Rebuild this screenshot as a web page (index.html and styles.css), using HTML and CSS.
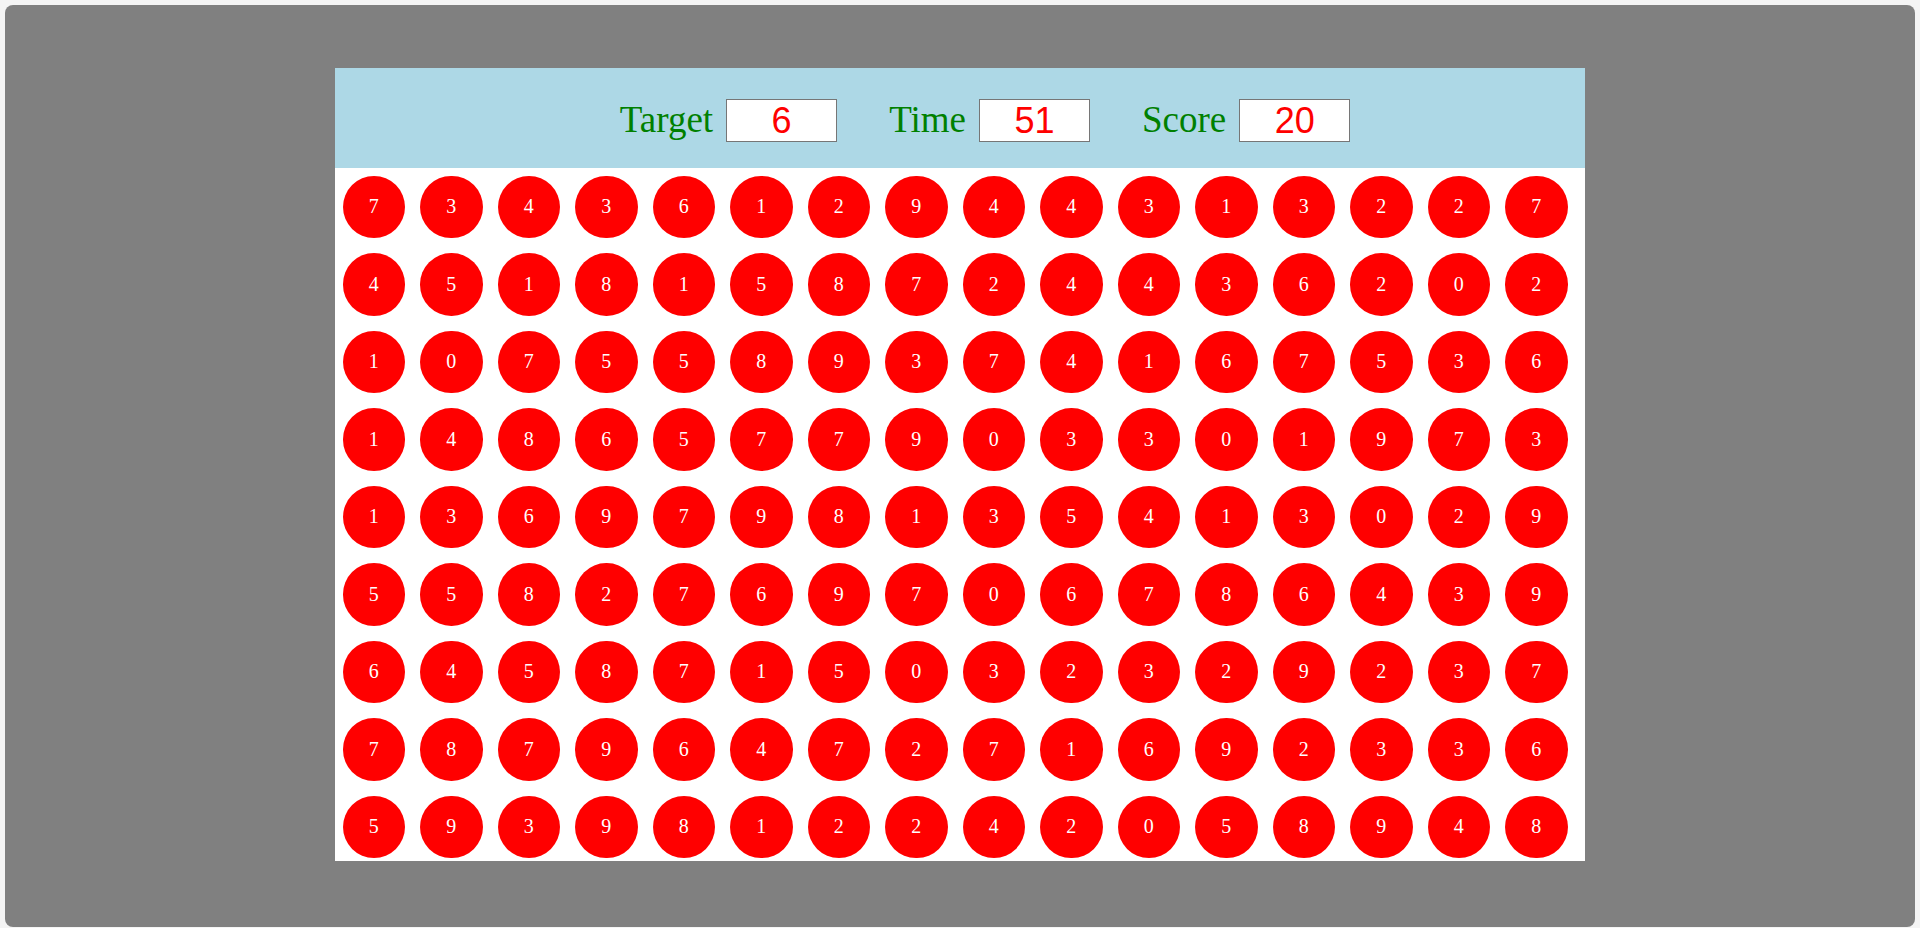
FILE: index.html
```html
<!DOCTYPE html>
<html>
<head>
<meta charset="utf-8">
<title>Number Game</title>
<link rel="stylesheet" href="styles.css">
</head>
<body>
<div class="frame">
  <div class="game">
    <div class="header">
      <div class="field"><span class="label">Target</span><input class="box" type="text" value="6" readonly></div>
      <div class="field"><span class="label">Time</span><input class="box" type="text" value="51" readonly></div>
      <div class="field"><span class="label">Score</span><input class="box" type="text" value="20" readonly></div>
    </div>
    <div class="board" id="board"></div>
  </div>
</div>
<script src="script.js"></script>
</body>
</html>
```

FILE: script.js
```js
const rows = [
  "7343612944313227",
  "4518158724436202",
  "1075589374167536",
  "1486577903301973",
  "1369798135413029",
  "5582769706786439",
  "6458715032329237",
  "7879647271692336",
  "5939812242058948"
];
const board = document.getElementById('board');
rows.forEach(r => {
  for (const d of r) {
    const c = document.createElement('div');
    c.className = 'ball';
    c.textContent = d;
    board.appendChild(c);
  }
});
```

FILE: styles.css
```css
html, body {
  margin: 0;
  padding: 0;
}
body {
  background: #f4f4f4;
  padding: 5px;
  box-sizing: border-box;
  height: 928px;
  overflow: hidden;
}
.frame {
  width: 1910px;
  height: 922px;
  background: #808080;
  border-radius: 8px;
  box-sizing: border-box;
  padding-top: 63px;
  display: flex;
  flex-direction: column;
  align-items: center;
}
.game {
  width: 1250px;
  display: flex;
  flex-direction: column;
}
.header {
  height: 100px;
  background: #add8e6;
  display: flex;
  align-items: center;
  justify-content: center;
  gap: 52px;
  padding-left: 50px;
  padding-top: 5px;
  box-sizing: border-box;
}
.field {
  display: flex;
  align-items: center;
}
.label {
  font-family: "Liberation Serif", "Times New Roman", serif;
  font-size: 37px;
  color: #008000;
  margin-right: 13px;
  line-height: 1.15;
}
.box {
  width: 111px;
  height: 43px;
  box-sizing: border-box;
  border: 1px solid #767676;
  padding: 0;
  margin: 0;
  background: #fff;
  color: #ff0000;
  font-family: "Liberation Sans", Arial, sans-serif;
  font-size: 36px;
  text-align: center;
  outline: none;
}
.board {
  height: 693px;
  background: #fff;
  overflow: hidden;
  box-sizing: border-box;
  padding: 7.5px 0 0 7.5px;
  display: grid;
  grid-template-columns: repeat(16, 62.5px);
  grid-auto-rows: 62.5px;
  gap: 15px;
  align-content: start;
}
.ball {
  width: 62.5px;
  height: 62.5px;
  border-radius: 50%;
  background: #ff0000;
  color: #fff;
  font-family: "Liberation Serif", "Times New Roman", serif;
  font-size: 20px;
  display: flex;
  align-items: center;
  justify-content: center;
}
```
